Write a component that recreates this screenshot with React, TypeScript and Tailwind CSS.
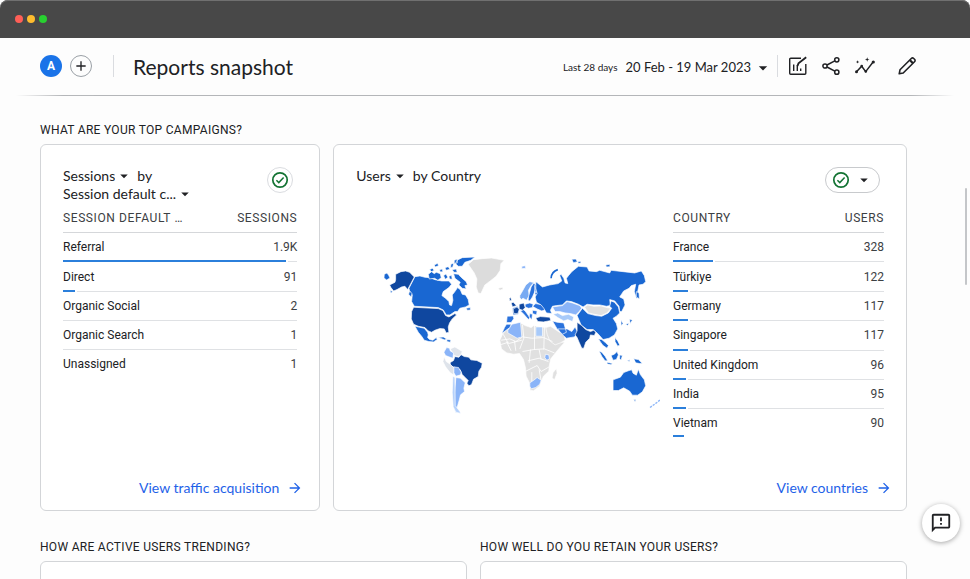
import type { ReactNode } from "react";
import { MdOutlineFeedback, MdArrowForward, MdAdd, MdArrowDropDown } from "react-icons/md";

type Row = { label: string; value: string; share: number };

const sessions: Row[] = [
  { label: "Referral", value: "1.9K", share: 95 },
  { label: "Direct", value: "91", share: 5 },
  { label: "Organic Social", value: "2", share: 0 },
  { label: "Organic Search", value: "1", share: 0 },
  { label: "Unassigned", value: "1", share: 0 },
];

const countries: Row[] = [
  { label: "France", value: "328", share: 19 },
  { label: "Türkiye", value: "122", share: 7 },
  { label: "Germany", value: "117", share: 7 },
  { label: "Singapore", value: "117", share: 7 },
  { label: "United Kingdom", value: "96", share: 6 },
  { label: "India", value: "95", share: 6 },
  { label: "Vietnam", value: "90", share: 5 },
];

function BarTable({ heads, rows, height }: { heads: [string, string]; rows: Row[]; height: string }) {
  return (
    <table className={`w-full border-separate border-spacing-0 text-xs text-[#202124] ${height}`}>
      <thead>
        <tr className="h-[30px] tracking-wider text-[#3c4043]">
          <th scope="col" className="border-b border-[#d5d7da] p-0 text-left font-normal">{heads[0]}</th>
          <th scope="col" className="border-b border-[#d5d7da] p-0 text-right font-normal">{heads[1]}</th>
        </tr>
      </thead>
      <tbody>
        {rows.map((r, i) => {
          const line = i < rows.length - 1 ? "border-b border-[#dfe1e4]" : "";
          return (
            <tr key={r.label} className="relative">
              <td className={`p-0 ${line}`}>
                {r.label}
                {r.share > 0 && (
                  <span
                    className="absolute bottom-0 left-0 box-content h-0.5 border-r-2 border-white bg-[#2b7fdb]"
                    style={{ width: `${r.share}%` }}
                  />
                )}
              </td>
              <td className={`p-0 text-right text-[#3c4043] ${line}`}>{r.value}</td>
            </tr>
          );
        })}
      </tbody>
    </table>
  );
}

function Picker({ label, value }: { label: string; value: string }) {
  return (
    <span className="inline-flex items-center">
      <select aria-label={label} className="field-sizing-content cursor-pointer appearance-none bg-transparent">
        <option>{value}</option>
      </select>
      <MdArrowDropDown className="size-[18px]" />
    </span>
  );
}

function CheckIcon() {
  return (
    <svg viewBox="0 0 18 18" className="size-[18px]" fill="none" stroke="#137333">
      <circle cx="9" cy="9" r="7.2" strokeWidth="1.7" />
      <path d="M5.4 9.3l2.4 2.3 4.8-5" strokeWidth="1.5" />
    </svg>
  );
}

function Card({ children, className = "" }: { children?: ReactNode; className?: string }) {
  return <article className={`rounded-md border border-[#d3d5d8] bg-white ${className}`}>{children}</article>;
}

function SectionTitle({ children }: { children: ReactNode }) {
  return <h2 className="text-xs tracking-wide text-[#202124]">{children}</h2>;
}

function CardLink({ children }: { children: ReactNode }) {
  return (
    <a href="#" className="flex items-center gap-2 font-[Lato,'Liberation_Sans',sans-serif] text-sm text-[#1f62e8]">
      {children}
      <MdArrowForward className="size-4" />
    </a>
  );
}

function ChartEditIcon() {
  return (
    <svg viewBox="0 0 20 20" className="size-5" fill="none" stroke="#202124" strokeWidth="1.4">
      <path d="M13 2.2H2.7a1 1 0 0 0-1 1v14.1a1 1 0 0 0 1 1h14.1a1 1 0 0 0 1-1V8" />
      <path d="M5.7 8.5v6.5M9.3 9v6M12.7 12.5V15" />
      <path d="M9.5 9.8l1-2.4 7.7-6.2" strokeWidth="1.8" />
    </svg>
  );
}

function ShareIcon() {
  return (
    <svg viewBox="0 0 20 20" className="size-5" fill="none" stroke="#202124" strokeWidth="1.5">
      <circle cx="15.8" cy="3.8" r="2.1" />
      <circle cx="4" cy="10" r="2.1" />
      <circle cx="15.8" cy="16.2" r="2.1" />
      <path d="M6 9l7.8-4.2M6 11l7.8 4.2" />
    </svg>
  );
}

function TrendIcon() {
  return (
    <svg viewBox="0 0 22 22" className="size-[22px]" fill="#202124">
      <path d="M2.5 16.8l5.2-5.6 4 5.4 7.4-9.6" fill="none" stroke="#202124" strokeWidth="1.5" />
      <circle cx="2.5" cy="16.8" r="1.5" />
      <circle cx="7.7" cy="11" r="1.3" />
      <circle cx="11.8" cy="16.4" r="1.3" />
      <circle cx="19.3" cy="7" r="1.6" />
      <path d="M13.2 2.2l.6 1.7 1.7.6-1.7.6-.6 1.7-.6-1.7-1.7-.6 1.7-.6zM3.6 5.2l.5 1.2 1.2.5-1.2.5-.5 1.2-.5-1.2-1.2-.5 1.2-.5z" />
    </svg>
  );
}

function PencilIcon() {
  return (
    <svg viewBox="0 0 20 20" className="size-5" fill="none" stroke="#202124" strokeWidth="1.6">
      <path d="M2.2 17.8l.8-4L14.3 2.5q1.2-1.1 2.4 0l.8.8q1.2 1.2 0 2.4L6.2 17z" strokeLinejoin="round" />
      <path d="M13 4.2l3 3" strokeWidth="2.2" />
    </svg>
  );
}

function WorldMap() {
  return (
    <svg viewBox="-57 0 912 540" className="w-full" role="img" aria-label="Users by country">
      <g stroke="#fff" strokeWidth="2" strokeLinejoin="round">
        <g fill="#1967d2">
          <path d="M120 95l15-2 15 4 15 1 15 6 20 4h22l8 10-8 10-17 12-4 12 11 8 10 10 2 10 6 2 4-16-2-16 8-10 8-12 8 6 6 14 10 2 8 14 3 16-11 6-17 4-7 10h-8l-15 10h-11l-9-15-15-7-72-4-8-14 2-20-8-12-2-8z" />
          <path d="M120 244l14 3 14 3 10 12 2 8-2 8 6 6 10 2 10-8 3 6-11 7-14-1-14-4-8-12-10-12z" />
          <path d="M246 46l16-8 38-2-12 10-18 6-8 12-12 0-8-8zM160 88l10-8 8 6 6-4 12 4 3 12-10 8-10-6-16 2zM164 74l8-4 6 6-8 4zM178 60l10-5 3 7-10 4zM210 68l10-3 5 8-11 3zM206 92l7-5 6 10-8 6zM222 94l8-3 2 12-8-1zM236 86l14 2 10 10 14 12 4 10-8 2 4 10-12-2-10-10 4-8-16-12zM228 58l8-4-2 12-7 2zM238 46l10-4-1 12-9 2zM232 74l12-2 3 10-10 0zM194 74l8-2 2 8-8 1zM274 190l12-2 1 7-10 1zM104 138l7 8-2 10-8-8zM28 88l8-4 5 7 4 8-10 6-8-6zM45 136l8 4-5 5zM190 278l15-2 10 6-5 3zM216 284l12 1-2 7-10-2z" />
        </g>
        <g fill="#0f479f">
          <path d="M62 88l16-8 14-2 12 4 14 14-20 38-8-10-10 2-14 8-10 4-8-10-4-8 16-8 2-8z" />
          <path d="M116 187l74 4 14 6 8 15 10 4 18-10 5 4-13 12-8 12-4 12 2 16-8 2-6-12-13-1-15 5-10 6-10-4-10-10-20-4-14-6-7-16 1-22z" />
          <path d="M226 353l10-6 4-12 12 2 6-8 10 6 14 2 6 8 18 2 16 8-2 12-8 12-2 16-14 8-6 16-8 4-6-8 4-8-10-10-8-8-6-14-16-6-14-8z" />
        </g>
        <path fill="#dcdcdc" d="M280 58l16-14 26-3 28-2 38 7-10 10-2 20-12 18-18 14-16 12-12 26-8-2-6-18 2-24-8-18zM370 130l12-3 3 5-10 4z" />
        <path fill="#dfe4eb" d="M208 336l6 14 12 8 12 12-2 20-10-6-14-18-8-16zM226 312l14-6 10 6 12 8-4 10-8 6-12-4z" />
        <path fill="#8ab4f8" d="M207 322l8-14 9 2 2 8 10 6-2 16-12-4-10-4zM237 366l14 2 8 14-2 8-14 4-6-10zM243 398l14 2 10 10 4 4-4 16 2 10-12 10-4 16-4 14-4 14 5 10-8-2-6-16 2-34z" />
        <path fill="#b5d1fb" d="M234 394l6 4 1 84 14 18 2 6-14-4-8-16-3-42z" />
      </g>

      <g transform="translate(375)" stroke="#fff" strokeWidth="2" strokeLinejoin="round">
        <g fill="#e0e0e0">
          <path d="M0 286l8-18 10-12 26-16 18-6 14 8 18 6 8-6 20 5 24 0 6 12 8 20 10 12 25 1-13 14-15 18-14 18-4 18-2 19-16 15-12 30-18 14-10-2-2-22-10-20-2-25-6-25-12-18-18 2-20-4-16-12z" />
          <path d="M138 248l14-4 18 12 24 16 2 14-14 8-16 6-16-12-8-20zM160 383l10-12 2 14-8 20-7-6zM254 186l10-6 18 4 22-1 18 5 12 2-12 14-18 8-20-4-18-4z" />
        </g>
        <path fill="none" strokeWidth="2.5" d="M4 286l26-4 18 8 20-14 28 4 36-2 26 12M20 290l14 28M44 288l4 30M68 240l4 40-12 32M104 238v76M134 244l-2 70M68 320l34-6 32-2 30 12M84 348l34-8 28 10M76 380l36-18 12 18 24-14M96 382v40M118 374l6 34M92 314l-4 40M118 314l6 30M10 268l16 28 40-10M0 300l26-8" />
        <path fill="#8ab4f8" d="M24 256l12-18 26-6 4 44-14 4-28-16zM137 328l10 2 2 12-8 4-6-8zM90 414l12-8 10-8 12 8-4 12-12 10-14 4-4-8zM158 186l30-4 14-12 16 4 22 8 6 8-8 10-10 10-16-4-16-2-16-4-14 0zM66 64l10-2 2 8-12 1z" />
        <path fill="#a8caf9" d="M108 246h20v28h-20zM160 208l14-4 14 8 18-4 16 8-4 14-14-6-12 4-18-10z" />
        <path fill="#78aaf2" d="M60 152l8-14 10-18 12-10 12 3-8 9-8 14 2 16-8 14-10-6-6 4-4-6z" />
        <g fill="#2a72dc">
          <path d="M86 156l8-30 8-12 7 8-5 20-6 14-8 12-5-2zM104 122l8-10 6 12 0 16-12 2zM104 142l10-2 8 10-12 6z" />
          <path d="M22 214l18-1 2 8-8 12-14 0zM20 238l14 0-4 10-14 10-10 8 8-18zM158 228l14 4 20 2 8 28-12 6-16-16zM76 178l14-4 10 4-2 10-12 2-10-4zM98 184l10-8 20 4 10 14-12 4-14-6zM98 196l14 2-2 12-12-4zM62 198l8-4 6 4 14 20-4 6-14-16zM174 252l28 0 14 8 10-14 8 16-10 14-24 4-18-16zM90 206l8 2-2 16-8-8z" />
        </g>
        <g fill="#1967d2">
          <path d="M108 110l10 8 10 8 22-6 25-4 11-8-6-16 4-4 8 12 4 14 8 2-4-16 6-8 10-12 20-16 26 2 6 12 22 2 10-4 30 8 4-8 36 4 35 4 20-6 9 14 4 18-8 8-12 2-4 20 4 18-8 2-6-20 4-22-13 4-7 8-16 8-12 18 12 6 4 18-10 20h-6l-2-16-13-16-15-4 2 18-12 2-20-4h-20l-18-2-12 8-14-8-21-8-15-2-12 12-18 2-12 2-6 12 4 10-16-2-8-14-8-10-14-8-4-16 6-10-4-16z" />
          <path d="M232 212l16-22 16 16 24 6 18 2 20-10 10-14-6-6 4-16 10 4 12 14 4 18-10 10-10 6 10 16 4 16-10 18-16 10-18 4-16-18-14-12h-18l-18-14z" />
          <path d="M340 405l22-8 10-14 16-6 8-2 4 10 10 6 6-18 6 16 12 16 4 18-10 18-14 10h-16l-8-12-18-10-16 8h-16z" />
          <path fill="none" stroke="#1967d2" strokeWidth="5" d="M154 100q1-20 20-26" />
          <path d="M216 43l12-1 5 8-12 3zM234 50l8-1 2 5-8 1zM318 60l12-2 1 7-11 1zM410 140l8 4 1 18-9-6zM390 222l8 4-7 10zM378 238l10-4-4 8zM364 226l6 10-6 6zM296 282l10 2 10 8 10 10-4 8-12-8-6-8zM298 318l8 4 10 12 8 14-8 0-10-14zM322 352l16 4-4 4-12-3zM334 332l10-4 8-8 4 10-6 14-10 2zM346 278l8 10 6 12-6 4-8-14zM360 330l8 2-4 14-4-4zM402 342l14 2 12 12-8 0-12-2zM402 464l7 1-3 6zM382 348l8-3 0 5z" />
          <path d="M38 190l14-6 7 8-4 16-15 2z" />
        </g>
        <path fill="#0f479f" d="M58 178l14-4 4 14-8 8-10-4zM34 174l6-2 10 10-12 4zM28 160l5-2 2 8-5 2zM40 192l12-6 6 8-4 12-12 0zM108 219l14-4 28 2 3 10-22 4-17-1zM232 232l14 10 12 12 14 6 10-4 6 6-4 10-12-2-2 10-12 12-6 18h-6l-8-18-6-14-6-8 6-12z" />
        <path fill="none" stroke="#8ab4f8" strokeWidth="4" strokeDasharray="7 3" d="M451 488l18-13 18-14" />
      </g>
    </svg>
  );
}

export default function App() {
  return (
    <div className="relative flex h-screen flex-col overflow-hidden bg-[#fdfdfd] font-[Roboto,'Liberation_Sans',sans-serif] text-[#202124]">
      <div className="flex h-[38px] shrink-0 items-center gap-1 rounded-t-lg bg-[#484848] px-[15px] shadow-[inset_0_1px_0_#707070]">
        <span className="size-2 rounded-full bg-[#ff5f57]" />
        <span className="size-2 rounded-full bg-[#febc2e]" />
        <span className="size-2 rounded-full bg-[#28d030]" />
      </div>

      <header className="flex h-[57px] shrink-0 items-center pr-[53px] pb-0.5 pl-10">
        <button className="flex size-[22px] items-center justify-center rounded-full bg-[#1a73e8] text-xs font-bold text-white">A</button>
        <button aria-label="Add comparison" className="ml-2 flex size-[22px] items-center justify-center rounded-full border border-[#9aa0a6]">
          <MdAdd className="size-4" />
        </button>
        <div className="mr-[19px] ml-[21px] h-[22px] w-px bg-[#dadce0]" />
        <h1 className="pt-0.5 font-[Lato,'Liberation_Sans',sans-serif] text-[21px] leading-7">Reports snapshot</h1>
        <button className="ml-auto flex items-center pt-1 font-[Lato,'Liberation_Sans',sans-serif] text-[13px]">
          <span className="mr-2 text-[10px]">Last 28 days</span>
          20 Feb - 19 Mar 2023
          <MdArrowDropDown className="ml-0.5 size-5" />
        </button>
        <div className="mr-2.5 ml-1 h-[22px] w-px bg-[#dadce0]" />
        <div className="flex items-center gap-[13px]">
          <button aria-label="Customise report"><ChartEditIcon /></button>
          <button aria-label="Share"><ShareIcon /></button>
          <button aria-label="Insights"><TrendIcon /></button>
          <button aria-label="Edit" className="ml-2"><PencilIcon /></button>
        </div>
      </header>
      <div className="mx-4 h-px shrink-0 bg-linear-to-r from-transparent from-0% via-[#b4b6b9] via-5% to-transparent to-100%">
        <div className="ml-auto h-full w-11/12 bg-linear-to-r from-[#b4b6b9] from-95% to-[#fdfdfd]" />
      </div>

      <main className="flex flex-col gap-1.5 pt-[26px] pr-[63px] pl-10">
        <SectionTitle>WHAT ARE YOUR TOP CAMPAIGNS?</SectionTitle>
        <div className="grid grid-cols-3 gap-[13px]">
          <Card className="flex min-h-[367px] flex-col px-[22px] pt-[22px] pb-3">
            <div className="flex items-start justify-between">
              <div className="font-[Lato,'Liberation_Sans',sans-serif] text-sm leading-[18px]">
                <div className="flex gap-1">
                  <Picker label="Metric" value="Sessions" />
                  by
                </div>
                <Picker label="Dimension" value="Session default c..." />
              </div>
              <button aria-label="Data quality" className="mr-1 flex size-[26px] items-center justify-center rounded-full border border-[#dadce0]">
                <CheckIcon />
              </button>
            </div>
            <BarTable heads={["SESSION DEFAULT …", "SESSIONS"]} rows={sessions} height="h-[175px]" />
            <div className="-mr-1.5 mt-auto flex justify-end">
              <CardLink>View traffic acquisition</CardLink>
            </div>
          </Card>

          <Card className="col-span-2 flex min-h-[367px] flex-col px-[22px] pt-[22px] pb-3">
            <div className="flex items-start justify-between">
              <div className="flex gap-1 font-[Lato,'Liberation_Sans',sans-serif] text-sm leading-[18px]">
                <Picker label="Metric" value="Users" />
                by Country
              </div>
              <button aria-label="Data quality options" className="mr-1 flex h-[26px] w-[55px] items-center justify-between rounded-full border border-[#c8cacd] px-1.5">
                <CheckIcon />
                <MdArrowDropDown className="size-[18px]" />
              </button>
            </div>
            <div className="mt-2.5 flex items-start gap-[13px]">
              <div className="min-w-0 flex-1 pt-[42px]">
                <WorldMap />
              </div>
              <div className="w-[211px] shrink-0">
                <BarTable heads={["COUNTRY", "USERS"]} rows={countries} height="h-[234px]" />
              </div>
            </div>
            <div className="-mr-2 mt-auto flex justify-end">
              <CardLink>View countries</CardLink>
            </div>
          </Card>
        </div>

        <div className="grid grid-cols-2 gap-[13px] pt-[22px]">
          <section className="flex flex-col gap-1.5">
            <SectionTitle>HOW ARE ACTIVE USERS TRENDING?</SectionTitle>
            <Card className="h-40" />
          </section>
          <section className="flex flex-col gap-1.5">
            <SectionTitle>HOW WELL DO YOU RETAIN YOUR USERS?</SectionTitle>
            <Card className="h-40" />
          </section>
        </div>
      </main>

      <div className="absolute top-[188px] right-[3px] h-[97px] w-0.5 rounded-full bg-[#c4c6c9]" />
      <button aria-label="Send feedback" className="absolute right-2.5 bottom-[37px] flex size-[38px] items-center justify-center rounded-full bg-white shadow-[0_1px_5px_rgba(0,0,0,0.35)]">
        <MdOutlineFeedback className="size-[22px]" />
      </button>
    </div>
  );
}
